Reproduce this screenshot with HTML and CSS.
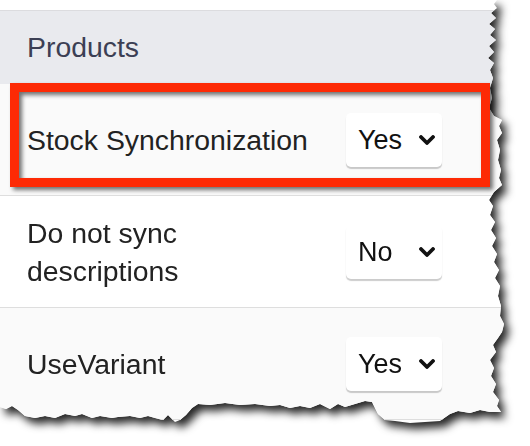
FILE: index.html
```html
<!DOCTYPE html>
<html>
<head>
<meta charset="utf-8">
<link rel="stylesheet" href="styles.css">
</head>
<body>
<div class="paper">
  <div class="sheet">
    <div class="table">
      <div class="head">Products</div>
      <div class="row odd">
        <div class="label">Stock Synchronization</div>
        <div class="select"><span class="val">Yes</span><svg class="chev" viewBox="0 0 16 10" width="16" height="10"><polyline points="2,2 8,8 14,2" fill="none" stroke="#111" stroke-width="3.8" stroke-linecap="round" stroke-linejoin="round"/></svg></div>
      </div>
      <div class="row">
        <div class="label">Do not sync descriptions</div>
        <div class="select"><span class="val">No</span><svg class="chev" viewBox="0 0 16 10" width="16" height="10"><polyline points="2,2 8,8 14,2" fill="none" stroke="#111" stroke-width="3.8" stroke-linecap="round" stroke-linejoin="round"/></svg></div>
      </div>
      <div class="row odd">
        <div class="label">UseVariant</div>
        <div class="select"><span class="val">Yes</span><svg class="chev" viewBox="0 0 16 10" width="16" height="10"><polyline points="2,2 8,8 14,2" fill="none" stroke="#111" stroke-width="3.8" stroke-linecap="round" stroke-linejoin="round"/></svg></div>
      </div>
    </div>
  </div>
  <div class="highlight"></div>
</div>
</body>
</html>
```
FILE: styles.css
```css
html, body {
  margin: 0;
  padding: 0;
  background: #ffffff;
}
body {
  width: 530px;
  height: 446px;
  overflow: hidden;
  font-family: "Liberation Sans", Arial, sans-serif;
}
.paper {
  position: relative;
  width: 530px;
  height: 446px;
  filter: drop-shadow(5px 6px 4px rgba(0, 0, 0, 0.85));
}
.sheet {
  width: 530px;
  height: 446px;
  background: #ffffff;
  padding-top: 10px;
  box-sizing: border-box;
  clip-path: polygon(0 0, 497px 0, 494px 4px, 497px 8px, 491px 13px, 496px 18px, 489px 24px, 495px 29px, 490px 35px, 496px 40px, 489px 46px, 494px 52px, 488px 58px, 494px 63px, 490px 70px, 493px 78px, 490px 88px, 492px 98px, 489px 108px, 494px 116px, 502px 120px, 499px 126px, 502px 133px, 497px 140px, 500px 150px, 498px 160px, 501px 170px, 499px 178px, 502px 185px, 494px 192px, 489px 200px, 493px 206px, 490px 215px, 495px 222px, 491px 230px, 496px 238px, 492px 246px, 497px 254px, 494px 262px, 499px 270px, 495px 278px, 500px 286px, 498px 296px, 501px 306px, 500px 316px, 504px 324px, 502px 332px, 498px 338px, 493px 345px, 496px 352px, 490px 360px, 494px 368px, 491px 376px, 496px 384px, 493px 392px, 499px 400px, 497px 406px, 501px 412px, 490px 412px, 480px 410px, 470px 413px, 458px 411px, 450px 414px, 440px 421px, 425px 422px, 410px 423px, 395px 421px, 385px 420px, 378px 414px, 372px 402px, 365px 401px, 355px 404px, 345px 407px, 338px 404px, 330px 409px, 320px 404px, 310px 408px, 300px 406px, 290px 408px, 280px 405px, 270px 406px, 255px 404px, 240px 405px, 225px 403px, 210px 405px, 198px 404px, 192px 408px, 186px 415px, 180px 420px, 175px 422px, 168px 415px, 163px 420px, 155px 418px, 148px 416px, 140px 418px, 130px 416px, 118px 417px, 112px 418px, 100px 416px, 92px 418px, 82px 414px, 75px 416px, 65px 414px, 55px 418px, 45px 416px, 35px 418px, 25px 416px, 18px 410px, 12px 406px, 6px 409px, 0 407px);
}
.table {
  border-top: 1px solid #dcdcdf;
}
.head {
  height: 73px;
  background: #e9eaee;
  color: #3c3f54;
  font-size: 28.4px;
  display: flex;
  align-items: center;
  padding-left: 27px;
}
.row {
  height: 111px;
  display: flex;
  align-items: center;
  padding: 0 88px 0 27px;
  background: #ffffff;
  border-bottom: 1px solid #dedede;
  color: #222222;
  font-size: 28.4px;
  line-height: 38px;
}
.row.odd {
  background: #fafafa;
}
.label {
  width: 300px;
}
.select {
  margin-left: auto;
  width: 96px;
  height: 54px;
  box-sizing: border-box;
  background: #ffffff;
  border-radius: 5px;
  box-shadow: 0 2px 1px rgba(0, 0, 0, 0.2);
  display: flex;
  align-items: center;
  padding: 0 7px 0 12px;
  font-size: 27px;
  color: #111111;
}
.val {
  flex: 1;
}
.chev {
  display: block;
}
.highlight {
  position: absolute;
  left: 10px;
  top: 83px;
  width: 480px;
  height: 104px;
  box-sizing: border-box;
  border: 9px solid #fd2a05;
  filter: drop-shadow(3px 3px 2px rgba(0, 0, 0, 0.55));
}
```
